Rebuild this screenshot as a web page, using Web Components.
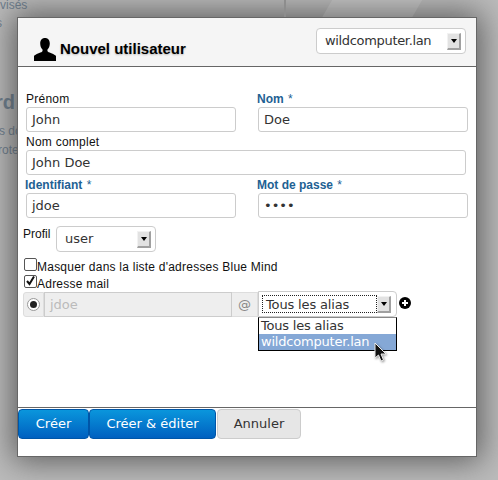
<!DOCTYPE html>
<html><head><meta charset="utf-8"><style>
html,body{margin:0;height:480px;overflow:hidden}
body{font-family:"Liberation Sans",sans-serif}
</style></head><body>
<bm-backdrop>
<bm-dialog>
<bm-header slot="header" title-text="Nouvel utilisateur" domain="wildcomputer.lan"></bm-header>
<bm-form></bm-form>
<bm-footer slot="footer"></bm-footer>
</bm-dialog>
</bm-backdrop>
<script>
const sel=(w,h,text)=>`<div class="sel" style="width:${w}px;height:${h}px"><span>${text}</span><i><b></b></i></div>`;
const selCss=`.sel{box-sizing:border-box;border:1px solid #ccc;border-radius:4px;background:#fff;display:flex;align-items:center;font:13px/18px "DejaVu Sans",sans-serif;color:#333;padding:0 4px 0 8px;justify-content:space-between}
.sel i{width:14px;height:17px;box-sizing:border-box;background:#e2e2e2;border-top:1px solid #f2f2f2;border-left:1px solid #f2f2f2;border-right:2px solid #a0a0a0;border-bottom:2px solid #a0a0a0;display:flex;align-items:center;justify-content:center}
.sel b{width:0;height:0;border:3.5px solid transparent;border-top:4px solid #000;border-bottom:0}`;
customElements.define('bm-backdrop',class extends HTMLElement{connectedCallback(){this.attachShadow({mode:'open'}).innerHTML=`<style>
:host{display:block;position:relative;width:498px;height:480px;box-sizing:border-box;padding:17px 21px 23px 17px;overflow:hidden;
background:#bcbcbc}
.t{position:absolute;color:#6f8090;font-family:"Liberation Sans",sans-serif;white-space:nowrap}
.p{position:absolute;left:284px;top:0;width:2px;height:17px;background:#8d8d8d}
.fade{position:absolute;left:333px;top:-20px;width:90px;height:37px;background:rgba(255,255,255,.1);transform:skewX(-30deg)}
.frame{position:relative;height:100%;box-shadow:0 0 30px 4px rgba(50,50,50,.7)}
</style>
<span class="t" style="left:0;top:-2px;font-size:12px">visés</span>
<span class="t" style="left:-4px;top:16px;font-size:12px">s</span>
<span class="t" style="left:-5px;top:91px;font-size:20px;font-weight:bold">rd</span>
<span class="t" style="left:-1px;top:124px;font-size:12px">s do</span>
<span class="t" style="left:-2px;top:143px;font-size:12px">rote</span>
<div class="frame"><slot></slot></div><div class="fade"></div><div class="p"></div>`}});
customElements.define('bm-dialog',class extends HTMLElement{connectedCallback(){this.attachShadow({mode:'open'}).innerHTML=`<style>
:host{display:flex;flex-direction:column;box-sizing:border-box;height:100%;background:#fff;border:1px solid #666}
.body{flex:1;min-height:0}
</style><slot name="header"></slot><div class="body"><slot></slot></div><slot name="footer"></slot>`}});
customElements.define('bm-header',class extends HTMLElement{connectedCallback(){this.attachShadow({mode:'open'}).innerHTML=`<style>
:host{display:flex;box-sizing:border-box;height:49px;background:#f5f5f5;border-bottom:1px solid #666;padding:10px 10px 0 15px;justify-content:space-between}
.l{display:flex;align-items:flex-end;gap:3px;height:33px}
h3{margin:0 0 2px;font:bold 15px/20px "Liberation Sans",sans-serif;color:#000;text-shadow:0 1px 2px rgba(0,0,0,.25)}
svg{display:block;margin-bottom:0}
${selCss}
.sel span{letter-spacing:-.33px}
</style><div class="l"><svg width="24" height="23" viewBox="0 0 24 23"><path fill="#000" d="M12 0c3 0 4.800 2.200 4.800 5.500 0 2.600-.9 4.500-2.100 5.800-.5.600-.4 1.900.3 2.400 1.500 1 6.500 2.200 8 4.300V23H1v-5c1.500-2.100 6.500-3.300 8-4.300.7-.5.8-1.800.3-2.400C8.100 10 7.200 8.100 7.200 5.500 7.200 2.200 9 0 12 0z"/></svg><h3>${this.getAttribute('title-text')}</h3></div>
${sel(150,26,this.getAttribute('domain'))}`}});
customElements.define('bm-input',class extends HTMLElement{connectedCallback(){const r=this.hasAttribute('req');const w=this.getAttribute('w');this.attachShadow({mode:'open'}).innerHTML=`<style>
:host{display:block;width:${w}px}
label{display:block;box-sizing:border-box;height:17px;padding-top:1px;font:${r?'bold ':''}12px/17px "Liberation Sans",sans-serif;color:${r?'#1e6193':'#111'};margin-left:${r?'-1px':'0'};letter-spacing:${r?'0':'.25px'}}
label span{font-weight:normal;margin-left:1px}
.i{box-sizing:border-box;height:25px;border:1px solid #ccc;border-radius:3px;padding:0 5px;font:13px/23px "DejaVu Sans",sans-serif;color:#333;background:#fff}
</style><label>${this.getAttribute('label')}${r?'<span> *</span>':''}</label><div class="i">${this.getAttribute('value')}</div>`}});
customElements.define('bm-check',class extends HTMLElement{connectedCallback(){const c=this.hasAttribute('checked');this.attachShadow({mode:'open'}).innerHTML=`<style>
:host{display:flex;align-items:flex-start;height:17px;font:12px/17px "Liberation Sans",sans-serif;color:#111;letter-spacing:.23px}
.b{box-sizing:border-box;width:13px;height:13px;border:1px solid #555;border-radius:2px;background:#fff;margin:1px 0 0 0;flex:none}
svg{display:block}
span{margin-top:2px}
</style><div class="b">${c?'<svg width="11" height="11" viewBox="0 0 11 11"><path d="M2 5l2.500 3L9 0.500" fill="none" stroke="#111" stroke-width="2"/></svg>':''}</div><span>${this.getAttribute('label')}</span>`}});
customElements.define('bm-form',class extends HTMLElement{connectedCallback(){this.attachShadow({mode:'open'}).innerHTML=`<style>
:host{display:block;position:relative;padding:23px 0 0 8px;height:340px;box-sizing:border-box}
.row{display:flex;gap:22px;padding-left:0;margin-bottom:1px}
.profil{display:flex;align-items:flex-start;margin:8px 0 0 -3px;height:26px;font:12px/17px "Liberation Sans",sans-serif;color:#111}
.profil span.lb{width:33px}
.checks{margin:5px 0 0 -2px;display:flex;flex-direction:column}
.mail{display:flex;margin:1px 0 0 -3px;height:26px;position:relative}
.radio{box-sizing:border-box;width:21px;height:25px;border:1px solid #ddd;border-radius:3px 0 0 3px;background:#eee;display:flex;align-items:center;justify-content:center}
.radio i{box-sizing:border-box;width:13px;height:13px;border-radius:50%;background:#fff;border:1px solid #999;display:flex;align-items:center;justify-content:center}
.radio b{width:7px;height:7px;border-radius:50%;background:#222}
.dis{box-sizing:border-box;width:188px;height:25px;border:1px solid #ccc;background:#eee;font:13px/23px "DejaVu Sans",sans-serif;color:#bbb;padding-left:5px}
.at{box-sizing:border-box;width:26px;height:25px;border:1px solid #ddd;border-left:0;background:#eee;font:13px/23px "DejaVu Sans",sans-serif;color:#888;text-align:center}
${selCss}
.mail .sel{border-radius:0 4px 4px 0;margin-top:-1px;padding:0 5px 0 8px}
.mail .sel span{outline:1px dotted #222;outline-offset:-1px;width:115px;height:18px;line-height:19px;padding-left:4px;box-sizing:border-box;margin-left:-5px;letter-spacing:-.15px}
.plus{margin:5px 0 0 2px;flex:none;display:block}
.list{position:absolute;left:235px;top:25px;width:139px;box-sizing:border-box;border:1px solid #000;border-top-color:#888;background:#fff;font:13px/16px "DejaVu Sans",sans-serif;color:#333;letter-spacing:-.2px}
.list div{padding-left:2px;height:16px}
.list .on{background:#85a8d6;color:#fff}
.cur{position:absolute;left:351px;top:50px;filter:drop-shadow(1px 1px 1px rgba(0,0,0,.4))}
</style>
<div class="row"><bm-input w="210" label="Prénom" value="John"></bm-input><bm-input w="210" req label="Nom" value="Doe"></bm-input></div>
<bm-input w="440" label="Nom complet" value="John Doe"></bm-input>
<div class="row" style="margin-top:1px"><bm-input w="210" req label="Identifiant" value="jdoe"></bm-input><bm-input w="210" req label="Mot de passe" value="••••"></bm-input></div>
<div class="profil"><span class="lb">Profil</span>${sel(100,26,'user')}</div>
<div class="checks"><bm-check label="Masquer dans la liste d'adresses Blue Mind"></bm-check><bm-check checked label="Adresse mail"></bm-check></div>
<div class="mail"><div class="radio"><i><b></b></i></div><div class="dis">jdoe</div><div class="at">@</div>${sel(139,26,'Tous les alias')}
<svg class="plus" width="12" height="12" viewBox="0 0 12 12"><circle cx="6" cy="6" r="6" fill="#000"/><path d="M6 3v6M3 6h6" stroke="#fff" stroke-width="2"/></svg>
<div class="list"><div>Tous les alias</div><div class="on">wildcomputer.lan</div></div>
<svg class="cur" width="14" height="20" viewBox="0 0 14 20"><path d="M1 1v15l3.500-3 2.500 6 2.500-1-2.500-6h5z" fill="#111" stroke="#eee" stroke-width="1"/></svg>
</div>`}});
customElements.define('bm-footer',class extends HTMLElement{connectedCallback(){this.attachShadow({mode:'open'}).innerHTML=`<style>
:host{display:flex;align-items:flex-start;box-sizing:border-box;height:49px;border-top:1px solid #666;padding-top:1px;font:13px/18px "DejaVu Sans",sans-serif}
.b{box-sizing:border-box;height:30px;display:flex;align-items:center;justify-content:center;border-radius:4px;border:1px solid #0055a8;color:#fff;background:linear-gradient(#0a96dc,#0060c0)}
.g{background:#e6e6e6;border-color:#ccc;color:#333;margin-left:1px}
</style><div class="b" style="width:71px">Créer</div><div class="b" style="width:127px">Créer &amp; éditer</div><div class="b g" style="width:84px">Annuler</div>`}});
</script></body></html>
